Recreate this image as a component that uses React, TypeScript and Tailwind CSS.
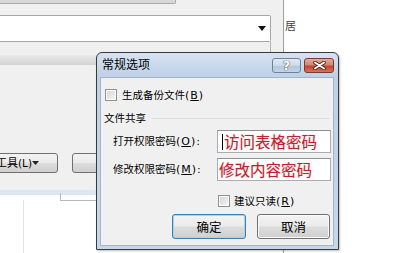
import React from 'react';

const cjk = "font-['Noto_Sans_CJK_SC','Noto_Sans',sans-serif]";
const latin = "font-['DejaVu_Sans',sans-serif] text-[11px] tracking-[1px]";

// 带下划线访问键的 Latin 部分，例如 (B)
const Key: React.FC<{ k: string; tail?: string }> = ({ k, tail = '' }) => (
  <span className={latin}>
    (<span className="underline underline-offset-1">{k}</span>){tail}
  </span>
);

const CheckBox: React.FC = () => (
  <div className="w-[12px] h-[12px] border border-[#8e8f8f] bg-white p-px shrink-0">
    <div className="w-full h-full bg-[linear-gradient(135deg,#d6d6d6,#f4f4f4)]" />
  </div>
);

const btn =
  'rounded-[3px] border bg-[linear-gradient(#f3f3f3_0%,#ebebeb_48%,#dcdcdc_52%,#cfcfcf_100%)] flex items-center justify-center';

const App: React.FC = () => {
  return (
    <div className={`relative w-[399px] h-[253px] overflow-hidden bg-white ${cjk}`}>
      <div className="flex h-full">
        {/* 背后的"另存为"窗口 */}
        <div className="w-[284px] h-full flex flex-col border-r border-[#9d9d9d] bg-[#f0f0f0]">
          <div className="h-[15px] shrink-0">
            <div className="w-[176px] h-[4px] bg-[#d8d8d8] border-b border-r border-[#aaaaaa] rounded-br-[2px]" />
          </div>
          <div className="w-[271px] h-[27px] shrink-0 bg-white border-y border-r border-[#a6a6a6] rounded-r-[2px] flex items-center justify-end pr-[4px]">
            <svg width="8" height="5" viewBox="0 0 8 5">
              <path d="M0 0h8L4 5z" fill="#111" />
            </svg>
          </div>
          <div className="w-[271px] h-[13px] shrink-0 bg-[#efefef] border-r border-[#b4b4b4] rounded-br-[2px]" />
          <div className="h-[10px] shrink-0 bg-[linear-gradient(#e9e9e9,#d3d3d3)]" />
          <div className="flex-1 flex items-start pt-[88px] gap-[14px]">
            <div className={`${btn} border-[#707070] ml-[-22px] w-[80px] h-[20px] justify-between pl-[4px] pr-[5px] text-[11px] text-black`}>
              <span>
                工具<span className="font-['DejaVu_Sans',sans-serif] text-[10.5px]">(L)</span>
              </span>
              <svg width="7" height="4" viewBox="0 0 7 4">
                <path d="M0 0h7L3.5 4z" fill="#222" />
              </svg>
            </div>
            <div className={`${btn} border-[#707070] w-[80px] h-[20px]`} />
          </div>
          <div className="h-[5px] shrink-0 bg-[#dce7f4]" />
          <div className="h-[58px] shrink-0 bg-white flex">
            <div className="w-[24px] h-full border-r border-[#e2e2e2] mt-[5px]" />
            <div className="w-[36px]" />
            <div className="flex-1 h-[8px] border-l border-b border-[#b8b8b8] mt-[-2px]" />
          </div>
        </div>
        <div className="flex-1 overflow-hidden pt-[19px] pl-[1px] text-[11px] leading-[13px] text-[#444]">居</div>
      </div>

      {/* 常规选项 对话框 */}
      <div className="absolute left-[96px] top-[52px] w-[243px] h-[198px] rounded-t-[6px] border border-[#3a3a3a] bg-[linear-gradient(#d6e2f0,#bfd1e7_24px,#c7d7ea)] flex flex-col shadow-[1px_1px_2px_rgba(0,0,0,0.25)]">
        <div className="h-[24px] shrink-0 flex items-start">
          <div className="pl-[5px] pt-[3px] text-[12px] leading-[16px] text-black">常规选项</div>
          <div className="ml-auto mr-[4px] mt-[5px] flex gap-[3px]">
            <div className="w-[29px] h-[15px] rounded-[3px] border border-[#6e8197] bg-[linear-gradient(#e2ebf5_0%,#cbd9ea_50%,#b3c7de_55%,#c4d5e8_100%)] flex items-center justify-center">
              <span className="font-['DejaVu_Sans',sans-serif] font-bold text-[13px] leading-none text-white [text-shadow:0_0_1px_#333,0_0_1px_#333]">?</span>
            </div>
            <div className="w-[30px] h-[15px] rounded-[3px] border border-[#7a3a32] bg-[linear-gradient(#e8aa9c_0%,#d88470_45%,#c4452f_55%,#d2745e_100%)] flex items-center justify-center">
              <svg width="13" height="9" viewBox="0 0 13 9">
                <path d="M2 1.5L11 7.5M11 1.5L2 7.5" stroke="#4a1a14" strokeWidth="3.6" strokeLinecap="round" />
                <path d="M2 1.5L11 7.5M11 1.5L2 7.5" stroke="#fff" strokeWidth="2" strokeLinecap="round" />
              </svg>
            </div>
          </div>
        </div>

        <div className="flex-1 ml-[3px] mr-[4px] mb-[3px] border border-[#a3b5ca] bg-[#f0f0f0] flex flex-col text-[10.5px] leading-[14px] text-black">
          <div className="flex items-center gap-[5px] ml-[4px] mt-[11px] h-[12px]">
            <CheckBox />
            <span>
              生成备份文件<Key k="B" />
            </span>
          </div>

          <div className="flex items-center ml-[3px] mr-[3px] mt-[10px] h-[14px]">
            <span>文件共享</span>
            <div className="flex-1 h-px bg-[#d8dfe7] ml-[6px]" />
          </div>

          <div className="flex items-center mt-[5px] h-[23px]">
            <div className="w-[116px] pl-[12px]">
              打开权限密码<Key k="O" tail=":" />
            </div>
            <div className="w-[114px] h-[23px] bg-white border border-[#abadb3] border-t-[#8c9096] flex items-center pl-[4px]">
              <div className="w-px h-[16px] bg-black" />
              <span className="ml-[1px] text-[15.5px] leading-none text-[#b8242f] [text-shadow:0_0_2px_#f7b9bd]">访问表格密码</span>
            </div>
          </div>

          <div className="flex items-center mt-[5px] h-[23px]">
            <div className="w-[116px] pl-[12px]">
              修改权限密码<Key k="M" tail=":" />
            </div>
            <div className="w-[114px] h-[23px] bg-white border border-[#abadb3] border-t-[#8c9096] flex items-center pl-[1px]">
              <span className="text-[15.5px] leading-none text-[#b8242f] [text-shadow:0_0_2px_#f7b9bd]">修改内容密码</span>
            </div>
          </div>

          <div className="flex items-center gap-[4px] ml-[117px] mt-[14px] h-[12px]">
            <CheckBox />
            <span>
              建议只读<Key k="R" />
            </span>
          </div>

          <div className="flex mt-[7px] ml-[71px] gap-[11px] text-[12.5px]">
            <div className={`${btn} w-[74px] h-[25px] border-[#3c7fb1] shadow-[inset_0_0_0_1px_#a6d3f1]`}>确定</div>
            <div className={`${btn} w-[73px] h-[25px] border-[#707070] shadow-[inset_0_0_0_1px_#fbfbfb]`}>取消</div>
          </div>
        </div>
      </div>
    </div>
  );
};

export default App;
